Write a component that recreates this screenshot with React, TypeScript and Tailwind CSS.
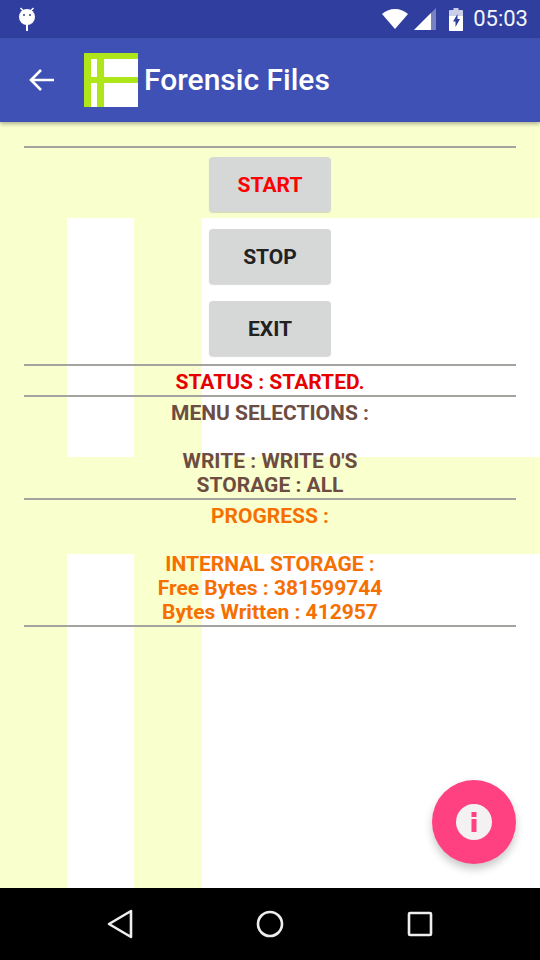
function Divider() {
  return <div className="h-[2px] bg-[#a3a3a0] shrink-0" />;
}

function AppButton({ label, color }: { label: string; color: string }) {
  return (
    <button className={`w-[122px] h-[55px] rounded-[4px] bg-[#d6d7d7] shadow-[0_1px_1px_rgba(0,0,0,0.15)] text-[21px] font-bold ${color}`}>
      {label}
    </button>
  );
}

function Background() {
  return (
    <svg className="absolute inset-0 w-full h-full" viewBox="0 0 540 766" preserveAspectRatio="none">
      <rect width="540" height="766" fill="#faffce" />
      <rect x="67" y="96" width="67" height="239" fill="#fff" />
      <rect x="202" y="96" width="338" height="239" fill="#fff" />
      <rect x="67" y="432" width="67" height="334" fill="#fff" />
      <rect x="202" y="432" width="338" height="334" fill="#fff" />
    </svg>
  );
}

export default function App() {
  return (
    <div className="w-[540px] h-[960px] flex flex-col overflow-hidden font-['Roboto',sans-serif]">
      <div className="h-[38px] shrink-0 bg-[#303f9f] flex items-center pl-[17px] pr-[12px] text-white">
        <svg width="20" height="26" viewBox="0 0 20 26" fill="#fff">
          <circle cx="10" cy="11" r="8" />
          <rect x="9" y="17" width="2" height="8" />
          <path d="M3.500 2 6.500 5M16.500 2 13.500 5" stroke="#fff" strokeWidth="1.500" />
          <circle cx="7" cy="9" r="1" fill="#303f9f" />
          <circle cx="13" cy="9" r="1" fill="#303f9f" />
        </svg>
        <div className="ml-auto flex items-center">
          <svg width="26" height="20" viewBox="0 0 26 20" fill="#fff">
            <path d="M13 20 0 5C3.300 2 7.900 0 13 0s9.700 2 13 5z" />
          </svg>
          <svg width="22" height="22" viewBox="0 0 22 22" className="ml-[6px]">
            <path d="M0 22 22 0v22z" fill="#fff" fillOpacity="0.35" />
            <path d="M0 22 17 5v17z" fill="#fff" />
          </svg>
          <svg width="14" height="23" viewBox="0 0 14 23" className="ml-[13px]">
            <path d="M4.500 0h5v2H13a1 1 0 0 1 1 1v19a1 1 0 0 1-1 1H1a1 1 0 0 1-1-1V3a1 1 0 0 1 1-1h3.500z" fill="#fff" fillOpacity="0.75" />
            <path d="M0 8h14v14a1 1 0 0 1-1 1H1a1 1 0 0 1-1-1z" fill="#fff" />
            <path d="M8.500 6 4 13.500h2.500V19l4.500-8H8.500z" fill="#303f9f" />
          </svg>
          <span className="ml-[10px] text-[22px] leading-[28px] text-[#f4f5fb]">05:03</span>
        </div>
      </div>

      <div className="relative z-10 h-[84px] shrink-0 bg-[#3f51b5] flex items-center pl-[28px] shadow-[0_2px_4px_rgba(0,0,0,0.3)]">
        <svg width="27" height="24" viewBox="0 0 27 24" fill="none" stroke="#fff" strokeWidth="2.600">
          <path d="M26 12H3M13 2 3 12l10 10" />
        </svg>
        <svg width="54" height="54" viewBox="0 0 54 54" className="ml-[29px]">
          <rect width="54" height="54" fill="#aee619" />
          <rect x="7" y="6" width="6" height="18" fill="#fff" />
          <rect x="20" y="6" width="34" height="18" fill="#fff" />
          <rect x="7" y="30" width="6" height="24" fill="#fff" />
          <rect x="20" y="30" width="34" height="24" fill="#fff" />
        </svg>
        <h1 className="ml-[6px] text-[30px] leading-[36px] font-medium text-white">Forensic Files</h1>
      </div>

      <main className="relative flex-1">
        <Background />
        <div className="relative flex flex-col px-[24px] pt-[24px] text-center text-[21px] leading-[24px] font-bold">
          <Divider />
          <div className="flex flex-col items-center gap-[17px] pt-[9px] pb-[8px]">
            <AppButton label="START" color="text-[#ff0000]" />
            <AppButton label="STOP" color="text-[#212121]" />
            <AppButton label="EXIT" color="text-[#212121]" />
          </div>
          <Divider />
          <div className="h-[29px] pt-[4px] text-[#e60000]">STATUS : STARTED.</div>
          <Divider />
          <div className="h-[101px] pt-[4px] text-[#6d4c41]">
            MENU SELECTIONS :<br /><br />WRITE : WRITE 0'S<br />STORAGE : ALL
          </div>
          <Divider />
          <div className="h-[125px] pt-[4px] text-[#f57000]">
            PROGRESS :<br /><br />INTERNAL STORAGE :<br />Free Bytes : 381599744<br />Bytes Written : 412957
          </div>
          <Divider />
        </div>
        <button className="absolute right-[24px] bottom-[24px] w-[84px] h-[84px] rounded-full bg-[#ff4081] flex items-center justify-center shadow-[0_5px_9px_rgba(0,0,0,0.22)]">
          <svg width="36" height="36" viewBox="0 0 36 36">
            <circle cx="18" cy="18" r="18" fill="#f4f1f2" />
            <rect x="15.500" y="8" width="5" height="5" fill="#ff4081" />
            <rect x="15.500" y="15" width="5" height="13" fill="#ff4081" />
          </svg>
        </button>
      </main>

      <div className="h-[72px] shrink-0 bg-black flex items-center justify-between pl-[107px] pr-[107px]">
        <svg width="26" height="30" viewBox="0 0 26 30" fill="none" stroke="#eee" strokeWidth="2.600" strokeLinejoin="round">
          <path d="M24 2v26L2 15z" />
        </svg>
        <svg width="28" height="28" viewBox="0 0 28 28" fill="none" stroke="#eee" strokeWidth="2.600">
          <circle cx="14" cy="14" r="12" />
        </svg>
        <svg width="26" height="26" viewBox="0 0 26 26" fill="none" stroke="#eee" strokeWidth="2.600" strokeLinejoin="round">
          <rect x="2" y="2" width="22" height="22" rx="1" />
        </svg>
      </div>
    </div>
  );
}
